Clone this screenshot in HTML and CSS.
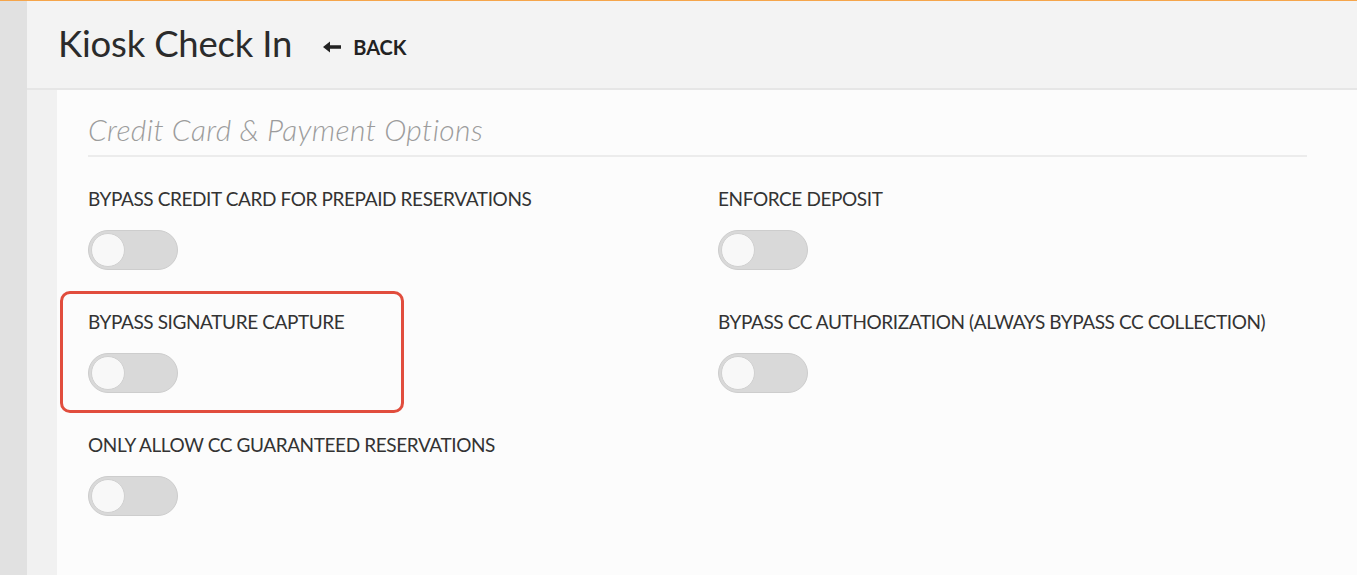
FILE: index.html
```html
<!DOCTYPE html>
<html>
<head>
<meta charset="utf-8">
<link rel="stylesheet" href="styles.css">
</head>
<body>
<div class="app">
  <div class="rail"></div>
  <div class="main">
    <header class="topbar">
      <h1 class="title">Kiosk Check In</h1>
      <a class="back">
        <svg class="back-icon" viewBox="0 0 18 12" width="18" height="12"><path d="M0 6 L7 0.5 L7 4.3 L18 4.3 L18 7.7 L7 7.7 L7 11.5 Z" fill="#222"/></svg>
        <span>BACK</span>
      </a>
    </header>
    <div class="body">
      <div class="gutter"></div>
      <section class="panel">
        <h2 class="section-title">Credit Card &amp; Payment Options</h2>
        <div class="grid">
          <div class="field">
            <div class="label">BYPASS CREDIT CARD FOR PREPAID RESERVATIONS</div>
            <div class="toggle"><span class="knob"></span></div>
          </div>
          <div class="field">
            <div class="label">ENFORCE DEPOSIT</div>
            <div class="toggle"><span class="knob"></span></div>
          </div>
          <div class="field highlighted">
            <div class="label">BYPASS SIGNATURE CAPTURE</div>
            <div class="toggle"><span class="knob"></span></div>
            <div class="highlight"></div>
          </div>
          <div class="field">
            <div class="label">BYPASS CC AUTHORIZATION (ALWAYS BYPASS CC COLLECTION)</div>
            <div class="toggle"><span class="knob"></span></div>
          </div>
          <div class="field">
            <div class="label">ONLY ALLOW CC GUARANTEED RESERVATIONS</div>
            <div class="toggle"><span class="knob"></span></div>
          </div>
        </div>
      </section>
    </div>
  </div>
</div>
</body>
</html>
```

FILE: styles.css
```css
* { box-sizing: border-box; }
html, body { margin: 0; padding: 0; }
body {
  font-family: Lato, "Open Sans", sans-serif;
  color: #333;
  width: 1357px;
  height: 575px;
  overflow: hidden;
  border-top: 1px solid #f5a54b;
  background: #fcfcfc;
}
.app { display: flex; height: 574px; }
.rail { width: 27px; background: #e1e1e1; flex: none; }
.main { flex: 1; display: flex; flex-direction: column; }
.topbar {
  height: 89px;
  flex: none;
  background: #f3f3f3;
  border-bottom: 2px solid #e6e6e6;
  display: flex;
  align-items: center;
  padding-left: 31px;
}
.title {
  margin: 0;
  font-weight: 400;
  font-size: 36.5px;
  color: #2b2b2b;
  letter-spacing: -0.2px;
  position: relative;
  top: -2px;
}
.back {
  display: flex;
  align-items: center;
  margin-left: 31px;
  font-weight: 700;
  font-size: 20px;
  color: #222;
  position: relative;
  top: 2px;
}
.back-icon { margin-right: 12px; margin-top: 1px; }
.body { flex: 1; display: flex; }
.gutter { width: 30px; background: #f1f1f1; flex: none; }
.panel {
  flex: 1;
  background: #fcfcfc;
  padding: 21px 50px 0 31px;
}
.section-title {
  margin: 0;
  font-style: italic;
  font-weight: 300;
  font-size: 30px;
  letter-spacing: 0.35px;
  line-height: 36px;
  color: #9c9c9c;
  padding-bottom: 8px;
  border-bottom: 2px solid #ececec;
}
.grid {
  display: grid;
  grid-template-columns: 630px 1fr;
  padding-top: 31px;
}
.field { position: relative; height: 123px; }
.label {
  font-size: 19px;
  color: #333;
  line-height: 22px;
  letter-spacing: -0.4px;
}
.toggle {
  margin-top: 20px;
  width: 90px;
  height: 40px;
  border-radius: 20px;
  background: #d9d9d9;
  border: 1px solid #cdcdcd;
  position: relative;
}
.knob {
  position: absolute;
  left: 2px;
  top: 2px;
  width: 34px;
  height: 34px;
  border-radius: 50%;
  background: #f8f8f8;
  border: 1px solid #d0d0d0;
}
.highlight {
  position: absolute;
  left: -28px;
  top: -20px;
  width: 344px;
  height: 122px;
  border: 3px solid #e14d3d;
  border-radius: 10px;
  pointer-events: none;
}
```
